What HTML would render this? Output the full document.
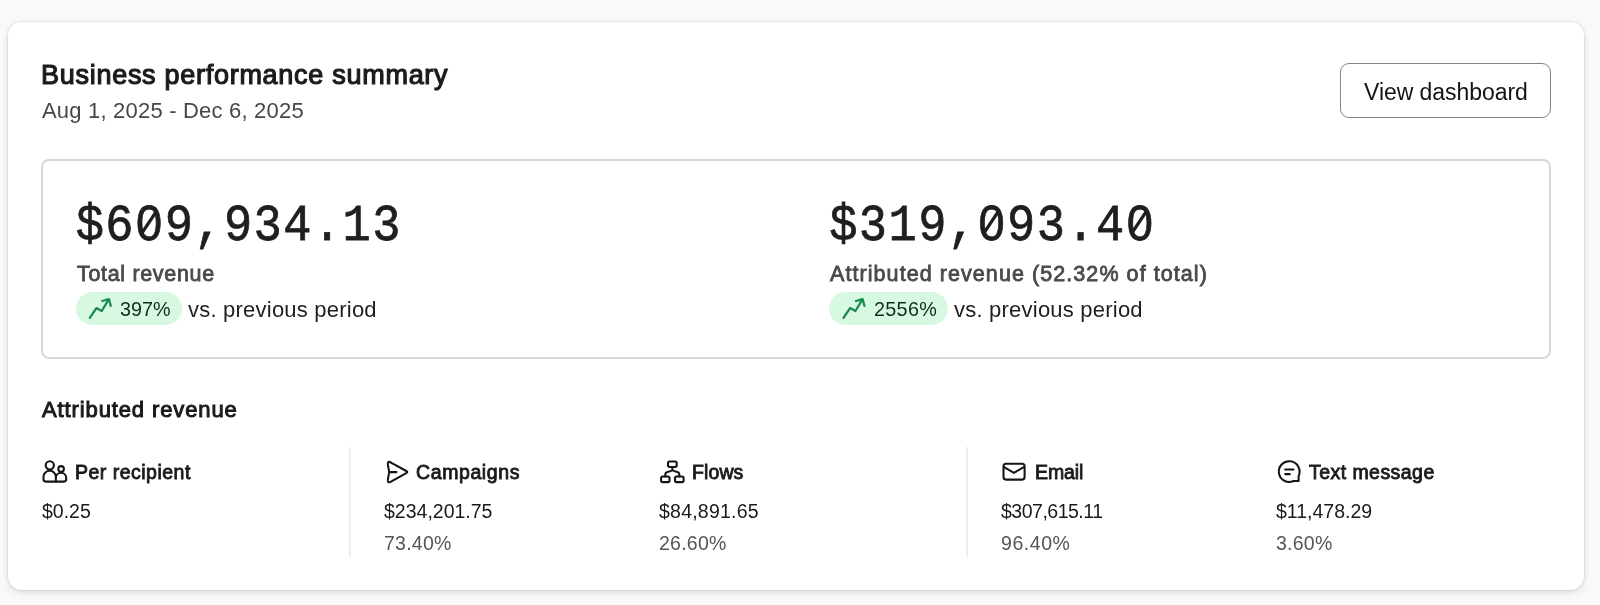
<!DOCTYPE html>
<html><head><meta charset="utf-8">
<style>
*{box-sizing:border-box;margin:0;padding:0}
html,body{width:1600px;height:605px;overflow:hidden;background:#f8f9fb;font-family:"Liberation Sans",sans-serif;color:#1a1a1a}
.card{position:absolute;left:8.2px;top:21.8px;width:1575.8px;height:568px;background:#fff;border-radius:14px;box-shadow:0 0 0 1px rgba(0,0,0,.04),0 0 6px rgba(0,0,0,.06),0 3px 6px rgba(0,0,0,.09)}
.t{position:absolute;white-space:nowrap;line-height:1;will-change:transform}
.title{left:41.2px;top:61.8px;font-size:27px;letter-spacing:0.72px;-webkit-text-stroke:1.15px #1b1b1b;color:#1b1b1b}
.date{left:42px;top:99.9px;font-size:22px;letter-spacing:0.2px;color:#474747}
.btn{position:absolute;left:1339.9px;top:63px;width:211px;height:55.2px;border:1.8px solid #858585;border-radius:9px}
.btxt{left:1363.7px;top:80.9px;font-size:23px;letter-spacing:-0.05px;color:#141414}
.box{position:absolute;left:41px;top:159px;width:1510px;height:200px;border:2px solid #d5d9df;border-radius:8px}
.big{position:absolute;white-space:nowrap;line-height:1;font-family:"Liberation Mono",monospace;font-size:47px;letter-spacing:1.45px;color:#1f1f1f;-webkit-text-stroke:0.7px #1f1f1f;transform:scaleY(1.115);transform-origin:0 36px}
.lbl{font-size:21.5px;-webkit-text-stroke:0.8px #4a4a4a;color:#4a4a4a}
.pill{position:absolute;top:292px;height:33px;border-radius:16.5px;background:#d7f9e1}
.pct1{top:300.3px;font-size:19.8px;color:#0f2e1d}
.vs{top:299.2px;font-size:22px;letter-spacing:0.22px;color:#1f1f1f}
.sec{left:41.8px;top:398.8px;font-size:22px;letter-spacing:0.88px;-webkit-text-stroke:1.0px #1b1b1b;color:#1b1b1b}
.ch{top:462.8px;font-size:19.5px;letter-spacing:0.41px;-webkit-text-stroke:0.85px #1b1b1b;color:#1b1b1b}
.val{top:501.6px;font-size:19.5px;color:#1a1a1a}
.pct{top:533.8px;font-size:19.5px;letter-spacing:0.25px;color:#555}
.div{position:absolute;width:1.5px;background:#eceef0;top:447px;height:110px}
svg.ov{position:absolute;left:0;top:0}
</style></head><body>
<div class="card"></div>
<div class="t title">Business performance summary</div>
<div class="t date">Aug 1, 2025 - Dec 6, 2025</div>
<div class="btn"></div>
<div class="t btxt">View dashboard</div>
<div class="box"></div>

<div class="big" style="left:75.7px;top:204.1px">$609,934.13</div>
<div class="t lbl" style="left:76.5px;top:264.3px;letter-spacing:0.67px">Total revenue</div>
<div class="pill" style="left:75.6px;width:106px"></div>
<div class="t pct1" style="left:119.5px">397%</div>
<div class="t vs" style="left:188px">vs. previous period</div>

<div class="big" style="left:829.2px;top:204.1px">$319,093.40</div>
<div class="t lbl" style="left:829.7px;top:264.3px;letter-spacing:1.07px">Attributed revenue (52.32% of total)</div>
<div class="pill" style="left:829.3px;width:118.5px"></div>
<div class="t pct1" style="left:873.5px;letter-spacing:0.3px">2556%</div>
<div class="t vs" style="left:954px">vs. previous period</div>

<div class="t sec">Attributed revenue</div>

<div class="div" style="left:349.2px"></div>
<div class="div" style="left:966px"></div>

<div class="t ch" style="left:74.8px;letter-spacing:0.49px">Per recipient</div>
<div class="t val" style="left:42px">$0.25</div>

<div class="t ch" style="left:415.9px;letter-spacing:0.6px">Campaigns</div>
<div class="t val" style="left:384px">$234,201.75</div>
<div class="t pct" style="left:384px">73.40%</div>

<div class="t ch" style="left:692.3px;letter-spacing:0.1px">Flows</div>
<div class="t val" style="left:659px;letter-spacing:0.22px">$84,891.65</div>
<div class="t pct" style="left:659px">26.60%</div>

<div class="t ch" style="left:1034.7px;letter-spacing:-0.1px">Email</div>
<div class="t val" style="left:1001px;letter-spacing:-0.5px">$307,615.11</div>
<div class="t pct" style="left:1001px;letter-spacing:0.55px">96.40%</div>

<div class="t ch" style="left:1309.2px;letter-spacing:0.45px">Text message</div>
<div class="t val" style="left:1276px">$11,478.29</div>
<div class="t pct" style="left:1276px">3.60%</div>

<svg class="ov" width="1600" height="605" viewBox="0 0 1600 605">
 <g>
  <rect x="144.3" y="217.3" width="9.4" height="10.4" fill="#fff"/>
  <path d="M142.2,232.6 L156.0,211.8" stroke="#1f1f1f" stroke-width="3.3" fill="none"/>
  <rect x="986.3" y="217.3" width="9.4" height="10.4" fill="#fff"/>
  <path d="M984.2,232.6 L998.0,211.8" stroke="#1f1f1f" stroke-width="3.3" fill="none"/>
  <rect x="1134.3" y="217.3" width="9.4" height="10.4" fill="#fff"/>
  <path d="M1132.2,232.6 L1146.0,211.8" stroke="#1f1f1f" stroke-width="3.3" fill="none"/>
 </g>
 <g fill="none" stroke="#178a4c" stroke-width="2.25" stroke-linecap="round" stroke-linejoin="round">
  <path d="M89.8,317.9 L96.4,308.1 L101.7,311 L108.9,299.1 M102.3,301 L108.9,299.1 L110.7,305.8"/>
  <path d="M843.5,317.9 L850.1,308.1 L855.4,311 L862.6,299.1 M856,301 L862.6,299.1 L864.4,305.8"/>
 </g>
 <g fill="none" stroke="#141414" stroke-width="2.05" stroke-linecap="round" stroke-linejoin="round">
  <!-- people -->
  <circle cx="49.8" cy="465.3" r="4.1"/>
  <circle cx="61.1" cy="468.9" r="2.8"/>
  <path d="M45.8,481.6 H55.85 V476.7 A6.18,6.18 0 0 0 43.5,476.7 V479.3 A2.3,2.3 0 0 0 45.8,481.6 Z"/>
  <path d="M55.85,481.6 H63.9 A2.3,2.3 0 0 0 66.2,479.3 V477.8 A5.18,5.18 0 0 0 55.85,477.8"/>
  <!-- plane -->
  <path d="M389.2,472.1 L387.9,465 Q387.1,460.4 391,462.6 L406.3,471 Q408.4,472.1 406.3,473.2 L391,481.6 Q387.1,483.8 387.9,479.2 Z M389.2,472.1 H396.5"/>
  <!-- flows -->
  <rect x="668" y="461.4" width="8.7" height="5.5" rx="1.6"/>
  <rect x="661.1" y="476.4" width="8.4" height="5.7" rx="1.6"/>
  <rect x="675" y="476.4" width="8.6" height="5.7" rx="1.6"/>
  <path d="M672.4,467 V469.5 C672.4,471 670,471.5 667.5,472 C666,472.3 665.3,473.2 665.3,474.5 V476.5 M672.4,469.5 C672.4,471 674.8,471.5 677.3,472 C678.8,472.3 679.3,473.2 679.3,474.5 V476.5"/>
  <!-- email -->
  <rect x="1003.5" y="463.7" width="21.1" height="15.9" rx="2.5"/>
  <path d="M1004.1,467.2 L1013.9,472.9 L1023.8,467.2"/>
  <!-- chat -->
  <path d="M1293.6,481.03 A10.4,10.4 0 1 1 1298.63,476 L1298.63,481.03 Z"/>
  <path d="M1285.2,469.5 H1293.5 M1285.2,474.1 H1289.8"/>
 </g>
</svg>
</body></html>
